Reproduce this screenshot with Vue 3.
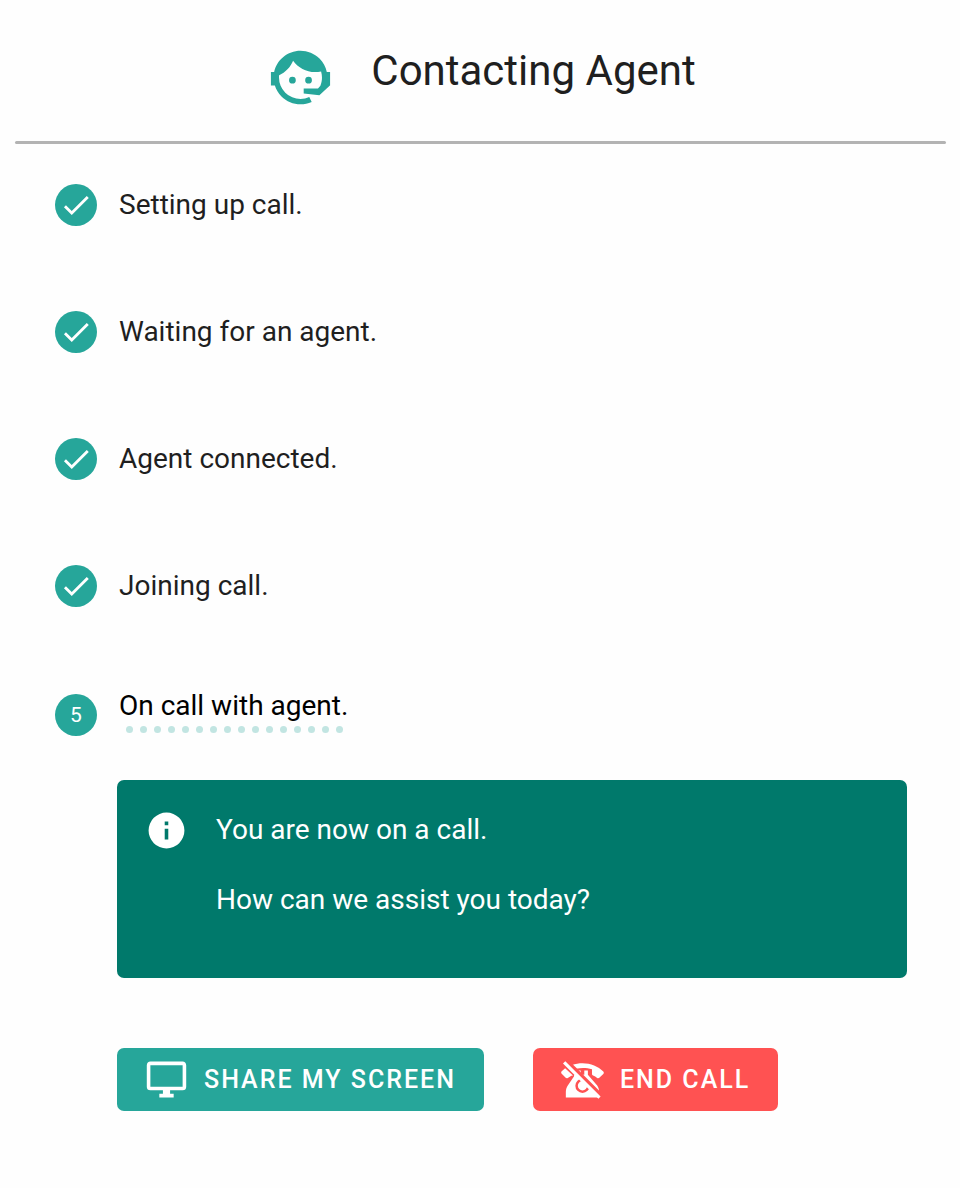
<script setup>
import { ref } from "vue";

const steps = ref([
  "Setting up call.",
  "Waiting for an agent.",
  "Agent connected.",
  "Joining call.",
]);

const onCall = ref("On call with agent.");
</script>

<template>
  <main class="call-card">
    <header class="call-header">
      <svg class="agent-icon" viewBox="0 0 24 24" aria-hidden="true">
        <path
          d="M18.72,14.76C19.07,13.91 19.26,13 19.26,12C19.26,11.28 19.15,10.59 18.96,9.95C18.31,10.1 17.63,10.18 16.92,10.18C13.86,10.18 11.15,8.67 9.5,6.34C8.61,8.5 6.91,10.26 4.77,11.22C4.73,11.47 4.73,11.74 4.73,12A7.27,7.27 0 0,0 12,19.27C13.05,19.27 14.06,19.04 14.97,18.63L15.78,20.26C14.6,20.8 13.3,21.08 12,21.08C9.58,21.08 7.27,20.13 5.57,18.42C4.53,17.38 3.76,16.11 3.33,14.73H2V10.18H3.09C3.93,6.04 7.6,2.92 12,2.92C14.4,2.92 16.71,3.87 18.42,5.58C19.69,6.84 20.54,8.45 20.89,10.18H22V14.73H21.94L18.38,18L13.08,17.4V15.73H17.91L18.72,14.76M9.27,11.77A1.14,1.14 0 1,1 9.27,14.05A1.14,1.14 0 1,1 9.27,11.77M14.72,11.77A1.14,1.14 0 1,1 14.72,14.05A1.14,1.14 0 1,1 14.72,11.77Z"
        />
      </svg>
      <h1>Contacting Agent</h1>
    </header>
    <hr />

    <ol class="steps">
      <!-- finished steps -->
      <li v-for="step in steps" :key="step" class="step">
        <span class="badge">
          <svg viewBox="0 0 24 24" aria-hidden="true">
            <path
              d="M21,7L9,19L3.5,13.5L4.91,12.09L9,16.17L19.59,5.59L21,7Z"
            />
          </svg>
        </span>
        <span>{{ step }}</span>
      </li>
      <!-- current step -->
      <li class="step current">
        <span class="badge">{{ steps.length + 1 }}</span>
        <div class="current-label">
          <span>{{ onCall }}</span>
          <div class="dots">
            <i v-for="n in 16" :key="n"></i>
          </div>
        </div>
      </li>
    </ol>

    <section class="content">
      <div class="alert">
        <svg class="info-icon" viewBox="0 0 24 24" aria-hidden="true">
          <path
            d="M13,9H11V7H13M13,17H11V11H13M12,2A10,10 0 0,0 2,12A10,10 0 0,0 12,22A10,10 0 0,0 22,12A10,10 0 0,0 12,2Z"
          />
        </svg>
        <div>
          <p>You are now on a call.</p>
          <p>How can we assist you today?</p>
        </div>
      </div>

      <div class="actions">
        <button type="button" class="btn share">
          <svg viewBox="0 0 24 24" aria-hidden="true">
            <path
              d="M21,16H3V4H21M21,2H3C1.89,2 1,2.89 1,4V16A2,2 0 0,0 3,18H10V20H8V22H16V20H14V18H21A2,2 0 0,0 23,16V4C23,2.89 22.1,2 21,2Z"
            />
          </svg>
          SHARE MY SCREEN
        </button>
        <button type="button" class="btn end">
          <svg viewBox="0 0 24 24" aria-hidden="true">
            <!-- handset -->
            <path
              d="M6.2,3.9C8,3.2 10,2.9 12,2.9C16.6,2.9 20.8,4.7 23.6,7.5C24,7.9 24,8.5 23.6,8.9L21.4,11C21.1,11.3 20.6,11.4 20.2,11.1C19.5,10.6 18.7,10.1 17.9,9.8C17.5,9.6 17.3,9.3 17.3,8.9V6.3C15.7,5.8 14,5.6 12.3,5.6C11,5.6 9.7,5.7 8.4,6Z"
            />
            <path
              d="M2.3,5.7L0.4,7.4C0,7.8 0,8.4 0.4,8.8L2.6,11C2.9,11.3 3.4,11.4 3.8,11.1L5.8,9.9L6.7,9.8Z"
            />
            <!-- body and dial -->
            <path
              d="M7.3,9.4V10.2L3.8,15.4C3.1,16.5 2.7,17.7 2.7,19V22H21.3V19C21.3,17.7 20.9,16.5 20.2,15.4L15,9.4V7H13V9.4H11V7H9V9.4Z"
            />
            <circle class="dial" cx="12" cy="15.5" r="3.3" />
            <path class="gap" d="M3,1.4L23,21.4" />
            <path d="M2.4,1.8L1.1,3L20.9,22.8L22.1,21.5Z" />
          </svg>
          END CALL
        </button>
      </div>
    </section>
  </main>
</template>

<style>
body {
  margin: 0;
  background: #fefefe;
}
</style>

<style scoped>
.call-card {
  padding: 0 14px 76px 15px;
  font-family: Roboto, "Liberation Sans", sans-serif;
  font-size: 28px;
  line-height: 42px;
  color: #1f1f1f;
}

.call-header {
  display: flex;
  justify-content: center;
  gap: 35px;
  padding: 42px 0 28px;
}

.agent-icon {
  width: 71px;
  height: 71px;
  fill: #26a69a;
}

h1 {
  margin: 0;
  font-size: 42px;
  font-weight: 400;
  line-height: 58px;
}

hr {
  height: 3px;
  margin: 0;
  border: 0;
  border-radius: 2px;
  background: #b3b3b3;
}

.steps {
  display: flex;
  flex-direction: column;
  gap: 85px;
  margin: 0;
  padding: 40px 40px 0;
  list-style: none;
}

.step {
  display: flex;
  align-items: center;
  gap: 22px;
}

.badge {
  display: flex;
  align-items: center;
  justify-content: center;
  width: 42px;
  height: 42px;
  border-radius: 50%;
  background: #26a69a;
  color: #fff;
  font-size: 21px;
}

.badge svg {
  width: 34px;
  height: 34px;
  fill: #fff;
}

.current {
  min-height: 46px;
  color: #000;
}

.current-label {
  display: flex;
  flex-direction: column;
  align-self: flex-start;
  gap: 6px;
  line-height: 28px;
}

.dots {
  display: flex;
  gap: 7px;
  padding: 0 7px;
}

.dots i {
  width: 7px;
  height: 7px;
  border-radius: 50%;
  background: #c2e5e2;
}

.content {
  padding: 42px 39px 0 102px;
}

.alert {
  display: flex;
  gap: 28px;
  padding: 29px 28px;
  border-radius: 7px;
  background: #00796b;
  color: #fff;
}

.info-icon {
  width: 43px;
  height: 43px;
  fill: #fff;
}

.alert p {
  margin: 0 0 28px;
}

.actions {
  display: flex;
  gap: 49px;
  margin-top: 70px;
}

.btn {
  display: flex;
  align-items: center;
  gap: 16px;
  height: 63px;
  padding: 0 28px;
  border: 0;
  border-radius: 7px;
  color: #fff;
  font-family: inherit;
  font-size: 25px;
  font-weight: 500;
  letter-spacing: 2px;
  cursor: pointer;
}

.btn svg {
  width: 43px;
  height: 43px;
  fill: #fff;
}

.share {
  background: #26a69a;
}

.end {
  background: #ff5252;
}

.end .dial {
  stroke: #ff5252;
  stroke-width: 1.4;
}

.end .gap {
  stroke: #ff5252;
  stroke-width: 2;
}
</style>
